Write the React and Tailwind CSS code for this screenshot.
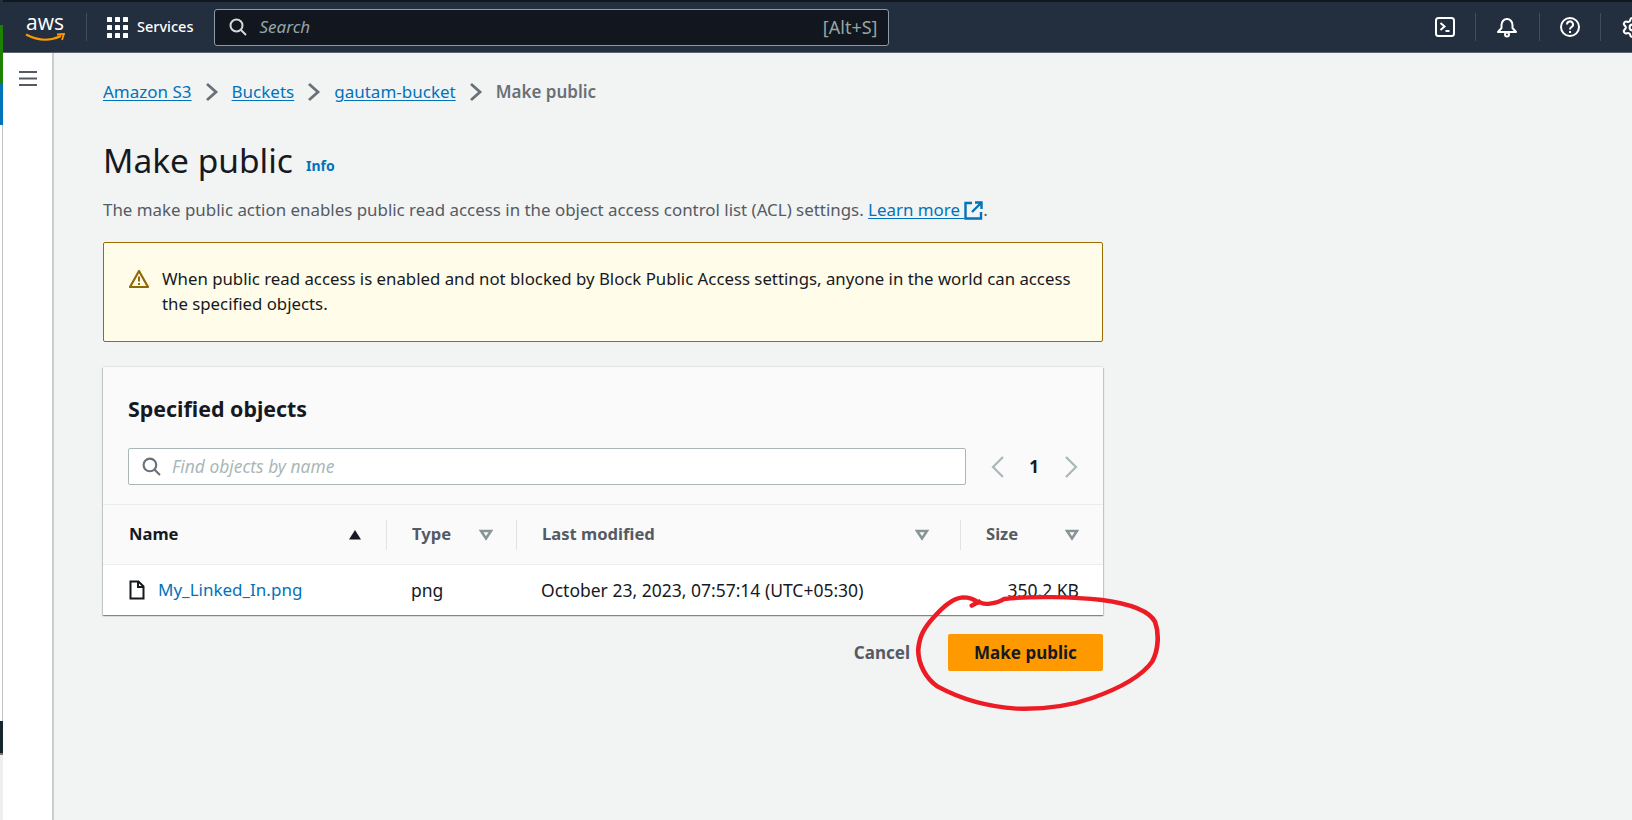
import React from "react";
import { Settings } from "lucide-react";

const font = "font-['Noto_Sans','Open_Sans',sans-serif]";

const Caret = ({ filled }) => (
  <svg width="14" height="12" viewBox="0 0 14 12">
    {filled ? (
      <path d="M7 1 L13 10.5 H1 Z" fill="#16191f" />
    ) : (
      <path d="M2 2 H12 L7 9.5 Z" fill="none" stroke="#879596" strokeWidth="2.6" />
    )}
  </svg>
);

const Crumb = () => (
  <svg width="14" height="20" viewBox="0 0 14 20" fill="none" stroke="#687078" strokeWidth="2.8">
    <path d="M2 2 L11 10 L2 18" />
  </svg>
);

const Chev = ({ flip }) => (
  <svg className={flip ? "rotate-180" : ""} width="14" height="24" viewBox="0 0 14 24" fill="none" stroke="#aab7b8" strokeWidth="2.2">
    <path d="M12 2 L2 12 L12 22" />
  </svg>
);

const SearchIcon = ({ color, size }) => (
  <svg width={size} height={size} viewBox="0 0 18 18" fill="none" stroke={color} strokeWidth="2">
    <circle cx="7.5" cy="7.5" r="6" />
    <path d="M12 12 L17 17" />
  </svg>
);

const NavDivider = () => <div className="h-7 w-px bg-[#414d5c]" />;

const HeadCell = ({ label, active, first, right }) => (
  <div className={`flex h-[30px] items-center justify-between ${first ? "pl-[26px] pr-[24px]" : "border-l border-[#e1e4e4] pl-[25px]"} ${right}`}>
    <span className={`text-[16.6px] font-bold ${active ? "text-[#16191f]" : "text-[#545b64]"}`}>{label}</span>
    <Caret filled={active} />
  </div>
);

const App = () => {
  return (
    <div className={`${font} flex h-screen w-full overflow-hidden bg-white text-[#16191f]`}>
      {/* bit of another window showing on the left edge */}
      <div className="flex w-[3px] shrink-0 flex-col">
        <div className="h-[25px] bg-[#232f3e]" />
        <div className="h-[58px] bg-[#1d8102]" />
        <div className="h-[42px] bg-[#0073bb]" />
        <div className="h-[596px] border-r border-[#c4c4c4] bg-white" />
        <div className="h-[32px] bg-[#16262f]" />
        <div className="h-[2px] bg-[#777]" />
        <div className="flex-1 bg-[#eeeeee]" />
      </div>

      <div className="flex min-w-0 flex-1 flex-col">
        <header className="flex h-[53px] shrink-0 items-center border-t-2 border-b border-t-[#11171f] border-b-[#5b6572] bg-[#232f3e] text-white">
          <div className="relative ml-[22px] flex h-[36px] w-[40px] flex-col items-center">
            <span className="text-[21px] leading-[26px] font-['Open_Sans',sans-serif]">aws</span>
            <svg className="-mt-[2px]" width="40" height="9" viewBox="0 0 40 9" fill="none">
              <path d="M1 1.5 Q19 11 36 3" stroke="#ff9900" strokeWidth="2" />
              <path d="M32 1.5 L39 1 L37 7" stroke="#ff9900" strokeWidth="1.8" />
            </svg>
          </div>
          <div className="ml-[21px]"><NavDivider /></div>
          <svg className="ml-[20px]" width="21" height="21" viewBox="0 0 21 21" fill="#fff">
            {[0, 8, 16].map((y) =>
              [0, 8, 16].map((x) => <rect key={`${x}-${y}`} x={x} y={y} width="5" height="5" rx="0.6" />)
            )}
          </svg>
          <span className="ml-[9px] text-[14.5px] font-medium">Services</span>
          <div className="ml-[21px] flex h-[37px] w-[675px] items-center rounded-[3px] border border-[#8d99a8] bg-[#12171f] pl-[14px] pr-[11px]">
            <SearchIcon color="#d5dbdb" size={18} />
            <span className="ml-[12px] text-[17px] italic text-[#95a5a6]">Search</span>
            <span className="ml-auto text-[18px] text-[#95a5a6]">[Alt+S]</span>
          </div>
          <div className="ml-auto flex items-center">
            <svg width="20" height="20" viewBox="0 0 20 20" fill="none" stroke="#fff" strokeWidth="2">
              <rect x="1" y="1" width="18" height="18" rx="2.5" />
              <path d="M5.5 6 L9.5 9.5 L5.5 13 M10.5 14 H14.5" />
            </svg>
            <div className="ml-[20px]"><NavDivider /></div>
            <svg className="ml-[21px]" width="20" height="21" viewBox="0 0 20 21" fill="none" stroke="#fff" strokeWidth="2">
              <path d="M1 15 H19 L15.5 11 V8 A5.5 6 0 0 0 4.5 8 V11 Z" strokeLinejoin="round" />
              <path d="M10 1 V2.5" />
              <circle cx="10" cy="17.5" r="2" />
            </svg>
            <div className="ml-[22px]"><NavDivider /></div>
            <svg className="ml-[20px]" width="20" height="20" viewBox="0 0 20 20" fill="none" stroke="#fff" strokeWidth="2">
              <circle cx="10" cy="10" r="9" />
              <path d="M7 7.5 A3 3 0 1 1 11.5 10 C10.3 10.7 10 11 10 12.5" />
              <path d="M10 14 V16" />
            </svg>
            <div className="ml-[20px]"><NavDivider /></div>
            <Settings className="ml-[20px] -mr-[12px] text-white" size={23} strokeWidth={2.2} />
          </div>
        </header>

        <div className="relative flex min-h-0 flex-1">
          <aside className="w-[51px] shrink-0 border-r-2 border-[#c9cdd0] bg-white pl-[16px] pt-[18px]">
            <svg width="20" height="16" viewBox="0 0 20 16" fill="#545b64">
              <rect y="0" width="18" height="2" />
              <rect y="6.5" width="18" height="2" />
              <rect y="13" width="18" height="2" />
            </svg>
          </aside>

          <main className="flex-1 bg-[#f2f3f3] pl-[49px] pt-[26px]">
            <nav className="flex h-[26px] items-center text-[17px]">
              <a className="text-[#0073bb] underline underline-offset-2">Amazon S3</a>
              <span className="mx-[13px]"><Crumb /></span>
              <a className="text-[#0073bb] underline underline-offset-2">Buckets</a>
              <span className="mx-[13px]"><Crumb /></span>
              <a className="text-[#0073bb] underline underline-offset-2">gautam-bucket</a>
              <span className="mx-[13px]"><Crumb /></span>
              <span className="font-semibold text-[#687078]">Make public</span>
            </nav>

            <div className="mt-[30px] flex h-[50px] items-center">
              <h1 className="text-[33.5px] font-normal text-[#16191f]">Make public</h1>
              <a className="ml-[13px] mt-[10px] text-[14px] font-bold text-[#0073bb]">Info</a>
            </div>

            <p className="mt-[13px] flex h-[24px] items-center text-[16.9px] text-[#545b64]">
              <span>The make public action enables public read access in the object access control list (ACL) settings.&nbsp;</span>
              <a className="flex items-center text-[#0073bb] underline underline-offset-2">
                Learn more&nbsp;
                <svg width="19" height="19" viewBox="0 0 19 19" fill="none" stroke="#0073bb" strokeWidth="2.4">
                  <path d="M8 2 H1.5 V17.5 H17 V11" />
                  <path d="M11 1.5 H17.5 V8 M17 2 L8 11" />
                </svg>
              </a>
              <span>.</span>
            </p>

            <section className="mt-[20px] flex h-[100px] w-[1000px] gap-[13px] rounded-[2px] border border-[#9d6b00] bg-[#fffce9] pl-[25px] pr-[24px] pt-[23px]">
              <svg className="mt-[3px] shrink-0" width="20" height="20" viewBox="0 0 20 20" fill="none">
                <path d="M10 2 L19 18 H1 Z" stroke="#906806" strokeWidth="2.2" strokeLinejoin="round" />
                <path d="M10 7.5 V12.5 M10 14 V16" stroke="#906806" strokeWidth="2" />
              </svg>
              <p className="text-[16.8px] leading-[25px]">
                When public read access is enabled and not blocked by Block Public Access settings, anyone in the world can access the specified objects.
              </p>
            </section>

            <section className="mt-[25px] w-[1000px] bg-white shadow-[0_1px_1px_0_rgba(0,28,36,0.3),1px_1px_1px_0_rgba(0,28,36,0.15),-1px_1px_1px_0_rgba(0,28,36,0.15),0_-1px_1px_0_rgba(0,28,36,0.06)]">
              <div className="h-[138px] border-b border-[#eaeded] bg-[#fafafa] px-[25px] pt-[27px]">
                <h2 className="text-[21.4px] font-bold leading-[30px]">Specified objects</h2>
                <div className="mt-[24px] flex items-center">
                  <div className="flex h-[37px] w-[839px] items-center rounded-[2px] border border-[#aab7b8] bg-white pl-[13px]">
                    <SearchIcon color="#687078" size={19} />
                    <span className="ml-[11px] text-[17.4px] italic text-[#aab7b8]">Find objects by name</span>
                  </div>
                  <span className="ml-[25px]"><Chev /></span>
                  <span className="ml-[22px] w-[14px] text-center text-[17px] font-bold">1</span>
                  <span className="ml-[23px]"><Chev flip /></span>
                </div>
              </div>
              <div className="grid h-[60px] grid-cols-[283px_130px_444px_143px] items-center border-b border-[#eaeded] bg-[#fafafa]">
                <HeadCell label="Name" active first />
                <HeadCell label="Type" right="pr-[23px]" />
                <HeadCell label="Last modified" right="pr-[31px]" />
                <HeadCell label="Size" right="pr-[24px]" />
              </div>
              <div className="grid h-[50px] grid-cols-[283px_130px_444px_143px] items-center text-[17.5px]">
                <div className="flex items-center pl-[26px]">
                  <svg width="16" height="20" viewBox="0 0 16 20" fill="none" stroke="#16191f" strokeWidth="2">
                    <path d="M1.5 1.5 H9.5 L14.5 6.5 V18.5 H1.5 Z" />
                    <path d="M9 2 V7 H14.5" />
                  </svg>
                  <a className="ml-[13px] text-[17px] text-[#0073bb]">My_Linked_In.png</a>
                </div>
                <span className="pl-[25px]">png</span>
                <span className="pl-[25px]">October 23, 2023, 07:57:14 (UTC+05:30)</span>
                <span className="pr-[24px] text-right">350.2 KB</span>
              </div>
            </section>

            <div className="mt-[19px] flex w-[1000px] items-center justify-end">
              <button className="text-[17px] font-bold text-[#545b64]">Cancel</button>
              <button className="ml-[38px] h-[37px] w-[155px] rounded-[2px] bg-[#ff9900] text-[17px] font-bold text-[#16191f]">Make public</button>
            </div>
          </main>

          {/* red marker scribble over the page */}
          <svg className="absolute left-[617px] top-[367px]" width="560" height="300" viewBox="0 0 1568 900" preserveAspectRatio="none" fill="none">
            <path
              d="M985 557 L1005 545 C1015 556 1055 552 1075 537 C1150 528 1270 530 1350 540 C1420 550 1480 570 1498 605 C1510 640 1508 690 1490 725 C1460 770 1400 805 1320 835 C1260 858 1180 868 1110 866 C1030 860 950 835 890 800 C855 775 835 730 835 690 C838 650 850 625 880 590 C905 560 930 535 960 532 C980 532 995 540 1003 548"
              stroke="#ec1c24"
              strokeWidth="13"
              strokeLinecap="round"
            />
          </svg>
        </div>
      </div>
    </div>
  );
};

export default App;
